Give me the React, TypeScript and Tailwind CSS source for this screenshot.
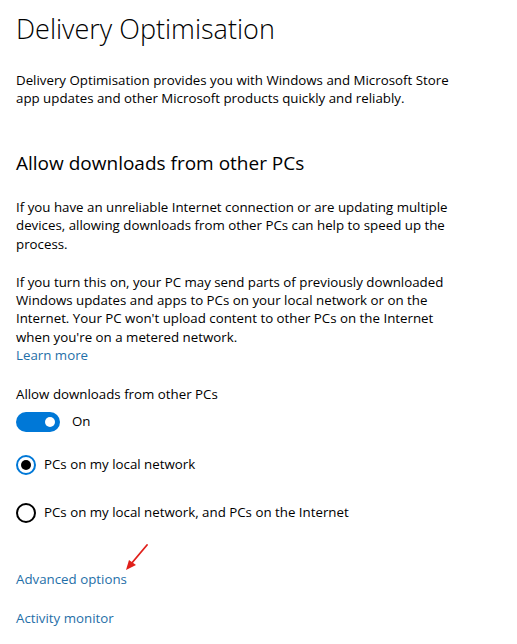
export default function App() {
  return (
    <div className="min-h-screen bg-white pl-4 pr-4 text-black font-['Open_Sans',sans-serif]">
      {/* Page title */}
      <h1 className="pt-[12px] text-[27px] leading-[34px] font-light">Delivery Optimisation</h1>

      <p className="mt-[24.5px] text-[13.3px] leading-[18.25px] max-w-[445px]">
        Delivery Optimisation provides you with Windows and Microsoft Store app updates and other Microsoft products quickly and reliably.
      </p>

      {/* Section */}
      <h2 className="mt-[41.5px] text-[19px] leading-[28px]">Allow downloads from other PCs</h2>

      <p className="mt-[21.5px] text-[13.3px] leading-[18.25px] max-w-[450px]">
        If you have an unreliable Internet connection or are updating multiple devices, allowing downloads from other PCs can help to speed up the process.
      </p>

      <p className="mt-[20px] text-[13.3px] leading-[18.25px] max-w-[450px]">
        If you turn this on, your PC may send parts of previously downloaded Windows updates and apps to PCs on your local network or on the Internet. Your PC won't upload content to other PCs on the Internet when you're on a metered network.
        <br />
        <a className="text-[#1f6fa8]">Learn more</a>
      </p>

      <div className="mt-[21px] text-[13.3px] leading-[18.25px]">Allow downloads from other PCs</div>

      {/* Toggle */}
      <div className="mt-[8.5px] flex items-center gap-3 h-5">
        <div className="w-[44px] h-5 rounded-full bg-[#0078d7] flex items-center justify-end pr-[5px]">
          <div className="w-[10px] h-[10px] rounded-full bg-white" />
        </div>
        <span className="text-[13.3px]">On</span>
      </div>

      {/* Radios */}
      <div className="mt-[23px] flex items-center gap-2 h-5">
        <div className="w-5 h-5 rounded-full border-2 border-[#0078d7] flex items-center justify-center">
          <div className="w-[10px] h-[10px] rounded-full bg-black" />
        </div>
        <span className="text-[13.3px]">PCs on my local network</span>
      </div>

      <div className="mt-[28px] flex items-center gap-2 h-5">
        <div className="w-5 h-5 rounded-full border-2 border-black" />
        <span className="text-[13.3px]">PCs on my local network, and PCs on the Internet</span>
      </div>

      {/* Links */}
      <div className="relative mt-[47px] text-[13.3px] leading-[18.25px]">
        <a className="text-[#1f6fa8]">Advanced options</a>
        <svg className="absolute left-[103px] -top-[26px]" width="40" height="32" viewBox="0 0 40 32">
          <line x1="28" y1="1" x2="12" y2="20" stroke="#e0201b" strokeWidth="1.8" strokeLinecap="round" />
          <polygon points="7,26 10,16 17,21" fill="#e0201b" />
        </svg>
      </div>
      <div className="mt-[20.5px] text-[13.3px] leading-[18.25px]">
        <a className="text-[#1f6fa8]">Activity monitor</a>
      </div>
    </div>
  );
}
